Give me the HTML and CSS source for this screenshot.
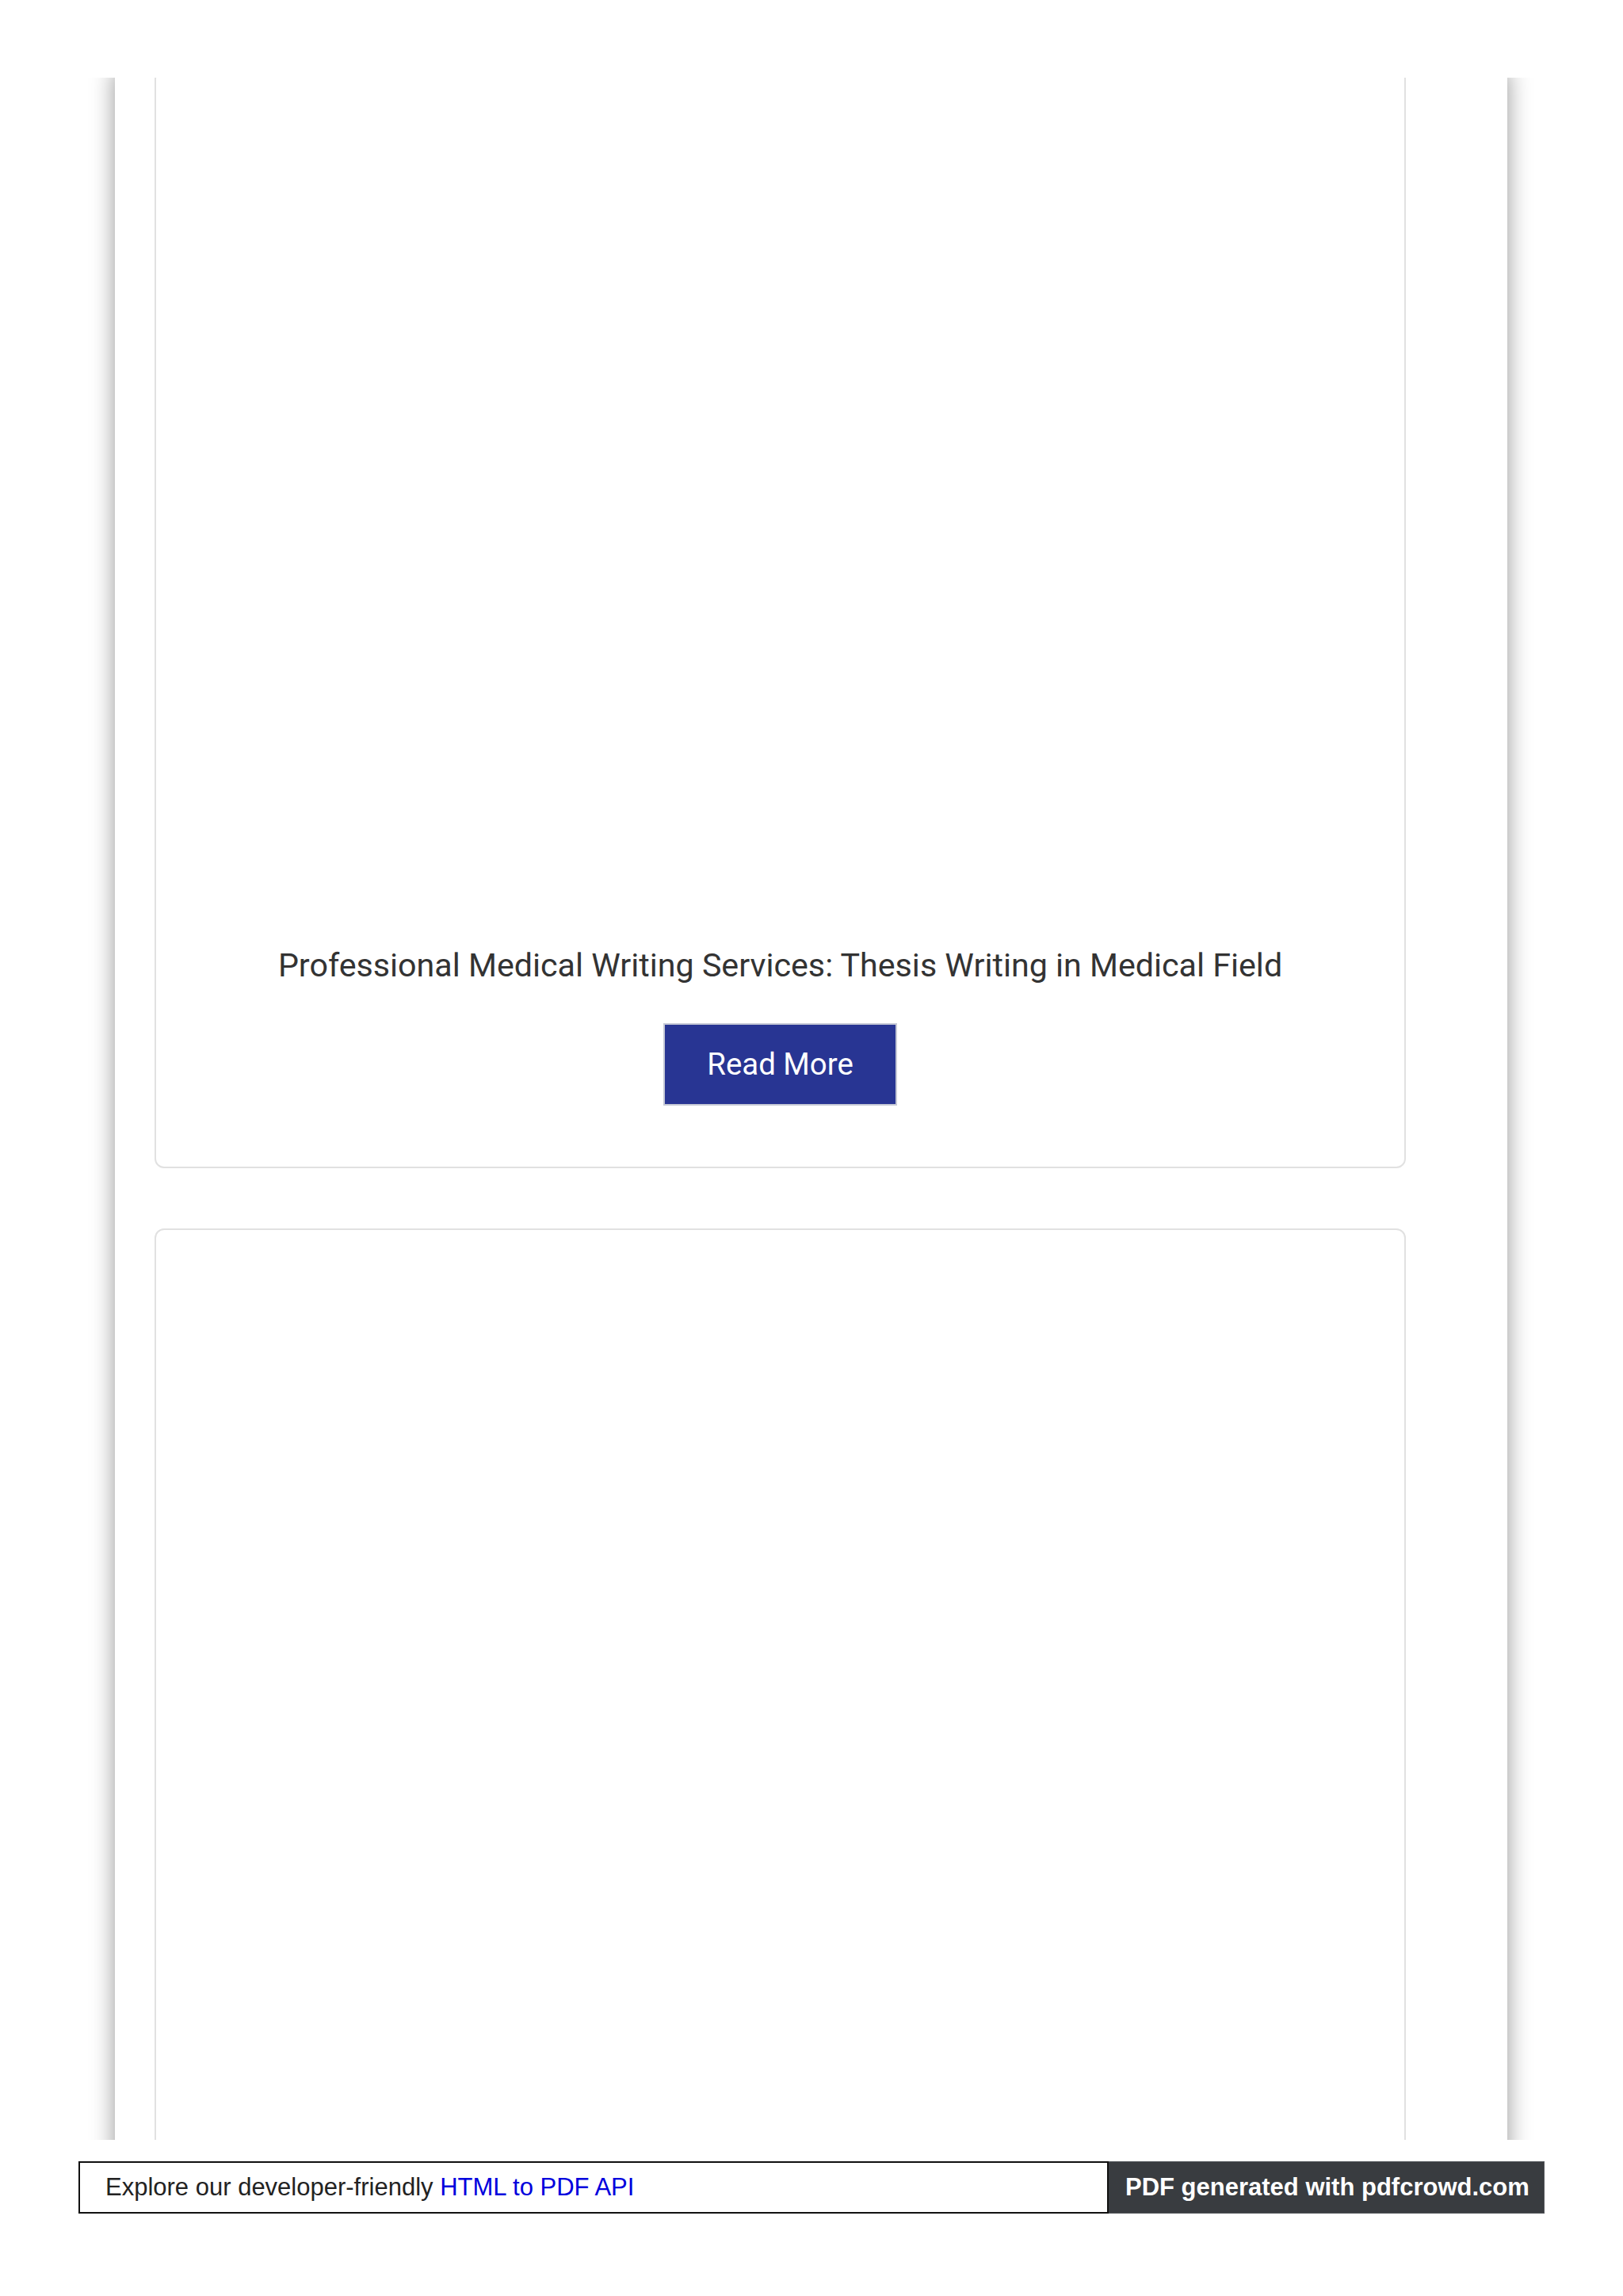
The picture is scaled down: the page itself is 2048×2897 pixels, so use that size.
FILE: index.html
```html
<!DOCTYPE html>
<html lang="en">
<head>
<meta charset="utf-8">
<title>Professional Medical Writing Services</title>
<link rel="stylesheet" href="styles.css">
</head>
<body>
<div class="sheet">
  <div class="page">
    <article class="card card-first">
      <div class="thumb"></div>
      <h2 class="card-title">Professional Medical Writing Services: Thesis Writing in Medical Field</h2>
      <a class="btn" href="#">Read More</a>
    </article>
    <article class="card card-second">
      <div class="thumb thumb-tall"></div>
    </article>
  </div>
</div>
<div class="pdf-footer">
  <div class="pdf-left">Explore our developer-friendly&nbsp;<a class="pdf-link" href="#">HTML to PDF API</a></div>
  <div class="pdf-right">PDF generated with pdfcrowd.com</div>
</div>
</body>
</html>
```

FILE: styles.css
```css
html, body {
  margin: 0;
  padding: 0;
  background: #ffffff;
}

body {
  width: 2048px;
  height: 2897px;
  overflow: hidden;
  font-family: Roboto, "Liberation Sans", Arial, sans-serif;
}

.sheet {
  margin: 98px 0 0 99px;
  width: 1850px;
  height: 2602px;
  overflow: hidden;
}

.page {
  margin: -10px 0 0 46px;
  width: 1757px;
  box-sizing: border-box;
  padding: 0 128px 0 50px;
  background: #ffffff;
  box-shadow: 0 0 28px rgba(0, 0, 0, 0.42);
  display: flex;
  flex-direction: column;
  gap: 76px;
}

.card {
  border: 2px solid #e1e1e1;
  border-radius: 12px;
  background: #ffffff;
  display: flex;
  flex-direction: column;
  align-items: center;
}

.card-first {
  padding-bottom: 77px;
}

.thumb {
  align-self: stretch;
  height: 1104px;
}

.thumb-tall {
  height: 1400px;
}

.card-title {
  margin: 0;
  font-family: Roboto, "Liberation Sans", sans-serif;
  font-weight: 400;
  font-size: 41.2px;
  line-height: 48px;
  color: #333333;
  text-align: center;
}

.btn {
  margin-top: 49px;
  display: block;
  box-sizing: border-box;
  height: 104px;
  padding: 0 53px;
  line-height: 100px;
  border: 2px solid #c6c9d6;
  background: #283593;
  color: #ffffff;
  font-family: Roboto, sans-serif;
  font-size: 38.4px;
  text-decoration: none;
}

.pdf-footer {
  margin: 27px 0 0 99px;
  width: 1850px;
  height: 66px;
  display: flex;
  font-family: "Liberation Sans", Arial, sans-serif;
  font-size: 31px;
}

.pdf-left {
  flex: 1;
  box-sizing: border-box;
  border: 2px solid #111111;
  background: #ffffff;
  color: #222222;
  padding-left: 32px;
  display: flex;
  align-items: center;
}

.pdf-link {
  color: #0000dd;
  text-decoration: none;
}

.pdf-right {
  width: 550px;
  box-sizing: border-box;
  background: #393c40;
  border: 1px solid #55585c;
  border-left: none;
  color: #ffffff;
  font-weight: 700;
  padding-left: 21px;
  display: flex;
  align-items: center;
}
```
